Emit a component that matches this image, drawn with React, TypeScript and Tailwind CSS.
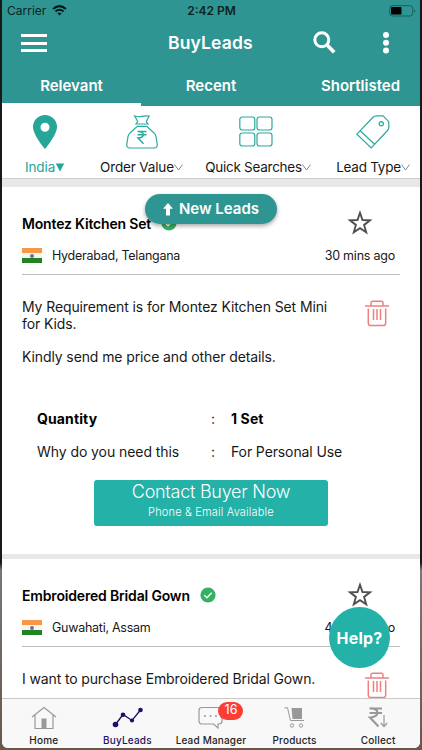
import type { ReactNode } from "react";

function Star() {
  return (
    <svg width="26" height="26" viewBox="0 0 26 26" className="block">
      <path d="M13 2.8 L15.5 10 L23 10.3 L17.1 14.9 L19.2 22.3 L13 18.1 L6.8 22.3 L8.9 14.9 L3 10.3 L10.5 10 Z" fill="none" stroke="#505050" strokeWidth="1.9" />
    </svg>
  );
}

function Trash() {
  return (
    <svg width="26" height="28" viewBox="0 0 26 28" fill="none" stroke="#ee8080" strokeWidth="1.5" className="block">
      <path d="M1 7H25M7 6.8V4Q7 2.3 8.7 2.3H17.3Q19 2.3 19 4V6.8M4.3 9.5V24Q4.3 26.6 6.8 26.6H19.2Q21.7 26.6 21.7 24V9.5M9.5 10V21M13 10V21M16.5 10V21" />
    </svg>
  );
}

function Flag() {
  return (
    <div className="relative flex h-[15px] w-5 flex-col">
      <div className="h-[5px] bg-[#f79847]" />
      <div className="h-[5px] bg-[#f4f4f4]" />
      <div className="h-[5px] bg-[#218322]" />
      <div className="absolute left-2 top-[5.5px] size-1 rounded-full bg-[#70708f]" />
    </div>
  );
}

function Check() {
  return (
    <svg width="16" height="16" viewBox="0 0 16 16" className="block">
      <circle cx="8" cy="8" r="7.6" fill="#36b164" />
      <path d="M4.3 8.3L7 10.8L11.7 5.8" fill="none" stroke="#fff" strokeWidth="1.3" />
    </svg>
  );
}

function Chevron() {
  return (
    <svg width="9" height="7" viewBox="0 0 9 7" className="mt-px">
      <path d="M.5.6L4.5 6L8.5.6" fill="none" stroke="#777" strokeWidth=".9" />
    </svg>
  );
}

function CardHead({ title, place, time }: { title: string; place: string; time: string }) {
  return (
    <div className="h-[88px] border-b border-[#bdbdbd] pt-[23px]">
      <div className="flex h-[26px] items-center">
        <span className="text-[14px] font-semibold tracking-[-0.17px] text-black">{title}</span>
        <span className="ml-[10px]"><Check /></span>
        <span className="ml-auto mr-[27px]"><Star /></span>
      </div>
      <div className="mt-[7px] flex h-[25px] items-center text-[12.5px] leading-[15px]">
        <Flag />
        <span className="ml-[10px] tracking-[-0.26px]">{place}</span>
        <span className="ml-auto mr-[5px] tracking-[-0.22px]">{time}</span>
      </div>
    </div>
  );
}

function Filter({ children, label, className }: { children: ReactNode; label: ReactNode; className: string }) {
  return (
    <div className={`flex shrink-0 flex-col items-center ${className}`}>
      <div className="flex h-[51px] items-center">{children}</div>
      <div className="mt-px flex h-[18px] items-center whitespace-nowrap text-[13.5px]">{label}</div>
    </div>
  );
}

function TabItem({ icon, label, color }: { icon: ReactNode; label: string; color: string }) {
  return (
    <div className="flex w-[83.6px] flex-col items-center">
      <div className="flex h-[36px] items-center pt-[3px]">{icon}</div>
      <span className={`whitespace-nowrap text-[10px] font-medium leading-[15px] tracking-[0.17px] ${color}`}>{label}</span>
    </div>
  );
}

export default function App() {
  return (
    <div className="h-[750px] w-[422px] overflow-hidden bg-linear-to-b from-[#191919] from-75% via-[#777] via-76% to-[#69574c] px-[2px] font-['Inter','Noto_Sans',sans-serif] text-[#181818]">
      <div className="flex h-[748px] flex-col overflow-hidden rounded-b-[6px] bg-white">
        <header className="h-[106px] shrink-0 bg-[#2f9593] text-white">
          <div className="flex h-[21px] items-center justify-between pl-[5px] pr-1 text-[#0c2423]">
            <div className="flex w-[100px] items-center gap-[6px] text-[12px]">
              Carrier
              <svg width="15" height="11" viewBox="0 0 15 11" fill="none" stroke="#071817" strokeWidth="2">
                <path d="M1 4Q7.5-1.8 14 4M3.5 6.5Q7.5 3 11.5 6.5" />
                <path d="M7.5 10.5L5.3 8.2Q7.5 6.6 9.7 8.2Z" fill="#071817" stroke="none" />
              </svg>
            </div>
            <span className="text-[12px] font-semibold">2:42 PM</span>
            <div className="flex w-[100px] justify-end">
              <svg width="27" height="12" viewBox="0 0 27 12">
                <rect x=".7" y=".7" width="23" height="10.3" rx="2.5" fill="none" stroke="#17615f" />
                <rect x="2" y="2" width="10.5" height="7.5" rx="1" fill="#000" />
                <path d="M25 4Q27.5 5.8 25 7.8Z" fill="#17615f" />
              </svg>
            </div>
          </div>
          <div className="flex h-[44px] items-center pl-[19px]">
            <div className="flex w-[26px] flex-col gap-[4.5px]">
              <div className="h-[3px] bg-white" />
              <div className="h-[3px] bg-white" />
              <div className="h-[3px] bg-white" />
            </div>
            <span className="ml-[121px] w-[86px] text-[17.5px] font-semibold tracking-[0.15px]">BuyLeads</span>
            <svg className="ml-[58px]" width="26" height="26" viewBox="0 0 26 26" fill="none" stroke="#fff">
              <circle cx="9.8" cy="9.8" r="7" strokeWidth="3" />
              <path d="M14.8 14.8L22.2 22.2" strokeWidth="3.7" />
            </svg>
            <svg className="ml-[44px]" width="8" height="24" viewBox="0 0 8 24" fill="#fff">
              <circle cx="4" cy="4" r="3" /><circle cx="4" cy="11.8" r="3" /><circle cx="4" cy="19.4" r="3" />
            </svg>
          </div>
          <div className="flex h-[41px] text-[15px] font-semibold leading-[42px]">
            <div className="w-[139px] border-b-[3px] border-white text-center">Relevant</div>
            <div className="w-[140px] text-center">Recent</div>
            <div className="w-[139px] pl-[20px] text-center">Shortlisted</div>
          </div>
        </header>

        <nav className="flex h-[73px] shrink-0 border-b border-[#cecece] text-[#181818]">
          <Filter className="w-[86px]" label={<span className="flex items-center tracking-[-0.1px] text-[#25a699]">India<svg width="10" height="9" viewBox="0 0 10 9"><path d="M.8.5H9.2L5 8.5Z" fill="#25a699" /></svg></span>}>
            <svg width="24" height="34" viewBox="0 0 24 34"><path fillRule="evenodd" d="M12 0A12 12 0 0 0 0 12C0 20 12 34 12 34S24 20 24 12A12 12 0 0 0 12 0ZM12 7.7A4.5 4.5 0 1 1 12 16.7A4.5 4.5 0 0 1 12 7.7Z" fill="#25a699" /></svg>
          </Filter>
          <Filter className="ml-[7px] w-[93px]" label={<><span className="tracking-[-0.16px]">Order Value</span><Chevron /></>}>
            <svg width="32" height="34" viewBox="0 0 32 34" fill="none" stroke="#2aa99e" strokeWidth="1.2">
              <path d="M8.7 1Q12 2.3 15.8 1.4T23.2 1L20.3 6.5L22 9H10L11.7 6.5ZM11.3 11.3H20.7L27.5 17.5Q29.5 19 30 21.5L31.2 29Q31.6 33 28 33H4Q.4 33 .8 29L2 21.5Q2.5 19 4.5 17.5Z" />
              <path d="M11.5 16.5H20.5M11.5 19.7H20.5M12 16.5C19 16 19 23 12 23L17.5 28.8" strokeWidth="1.5" />
            </svg>
          </Filter>
          <Filter className="ml-[13px] w-[114px]" label={<><span className="tracking-[-0.27px]">Quick Searches</span><Chevron /></>}>
            <svg className="-ml-[4px]" width="34" height="32" viewBox="0 0 34 32" fill="none" stroke="#2aa99e" strokeWidth="1.2">
              <rect x=".8" y="1" width="15" height="13" rx="2.5" /><rect x="18" y="1" width="15" height="13" rx="2.5" />
              <rect x=".8" y="17" width="15" height="13" rx="2.5" /><rect x="18" y="17" width="15" height="13" rx="2.5" />
            </svg>
          </Filter>
          <Filter className="ml-[14px] w-[88px]" label={<><span className="tracking-[-0.25px]">Lead Type</span><Chevron /></>}>
            <svg width="34" height="34" viewBox="0 0 34 34" fill="none" stroke="#2aa99e" strokeWidth="1.2">
              <path d="M.9 19.2L17 2.3Q18.5.9 20.5.9H27L32.8 6.7V12.5Q32.8 14 31.5 15.5L15.2 33ZM4.2 15.7L18.6 29.3" /><circle cx="25.3" cy="8.7" r="2.1" />
            </svg>
          </Filter>
        </nav>
        <div className="h-2 shrink-0 bg-[#e8e8e8]" />

        <main className="h-[511px] shrink-0 overflow-hidden">
          <article className="h-[367px] px-5">
            <CardHead title="Montez Kitchen Set" place="Hyderabad, Telangana" time="30 mins ago" />
            <div className="flex h-[127px] pt-[24px]">
              <div className="w-[320px] whitespace-pre-line text-[14px] leading-[16.8px] tracking-[-0.11px]">{"My Requirement is for Montez Kitchen Set Mini\nfor Kids.\n\nKindly send me price and other details."}</div>
              <div className="ml-[22px]"><Trash /></div>
            </div>
            <div className="grid grid-cols-[174px_20px_1fr] pl-[15px] text-[14px] leading-[33px] tracking-[-0.07px]">
              <b className="font-bold tracking-[0.12px] text-black">Quantity</b><span>:</span><b className="font-bold tracking-[0.12px] text-black">1 Set</b>
              <span>Why do you need this</span><span>:</span><span className="tracking-[-0.11px]">For Personal Use</span>
            </div>
            <button className="ml-[72px] mt-[12px] flex h-[46px] w-[234px] flex-col items-center rounded-[3px] bg-[#23b1a8] text-white">
              <span className="text-[18px] font-light leading-[24px] tracking-[-0.26px]">Contact Buyer Now</span>
              <span className="text-[11px] font-light leading-[17px] tracking-[0.18px]">Phone &amp; Email Available</span>
            </button>
          </article>
          <div className="h-[5px] bg-[#e8e8e8]" />
          <article className="px-5">
            <CardHead title="Embroidered Bridal Gown" place="Guwahati, Assam" time="45 mins ago" />
            <div className="flex pt-[24px]">
              <div className="w-[320px] text-[14px] leading-[16.8px] tracking-[-0.13px]">I want to purchase Embroidered Bridal Gown.</div>
              <div className="ml-[22px]"><Trash /></div>
            </div>
          </article>
        </main>

        <footer className="flex h-[50px] shrink-0 border-t border-[#c9c9c9] bg-[#f8f8f8]">
          <TabItem label="Home" color="text-[#222]" icon={
            <svg width="26" height="24" viewBox="0 0 26 24" fill="none" stroke="#999"><path d="M1 11L13 1.5L25 11M4 9V22.5H22V9" strokeWidth="1.2" /><path d="M10.5 12.5H15.5V22H10.5Z" fill="#999" stroke="none" /></svg>
          } />
          <TabItem label="BuyLeads" color="text-[#211361]" icon={
            <svg width="31" height="22" viewBox="0 0 31 22" fill="#1c0f67"><path d="M3.5 17.5L11 7.5L20 13.5L28.5 3" fill="none" stroke="#1c0f67" strokeWidth="1.3" /><circle cx="3.5" cy="17.5" r="2.8" /><circle cx="11" cy="7.7" r="2.3" /><circle cx="20" cy="13.5" r="2.1" /><circle cx="28.5" cy="3" r="2.3" /></svg>
          } />
          <TabItem label="Lead Manager" color="text-[#222]" icon={
            <div className="relative">
              <svg width="25" height="24" viewBox="0 0 25 24"><path d="M4 1.5H21Q24 1.5 24 4.5V15Q24 18 21 18H20V22L15.5 18H4Q1 18 1 15V4.5Q1 1.5 4 1.5Z" fill="none" stroke="#999" strokeWidth="1.2" /><g fill="#999"><circle cx="7" cy="10" r="1" /><circle cx="12.5" cy="10" r="1" /><circle cx="18" cy="10" r="1" /></g></svg>
              <span className="absolute left-[20px] top-[-4px] flex h-[18px] w-[25px] items-center justify-center rounded-full bg-[#fb3d36] text-[12.5px] text-white">16</span>
            </div>
          } />
          <TabItem label="Products" color="text-[#222]" icon={
            <svg width="21" height="23" viewBox="0 0 21 23" fill="none" stroke="#999"><path d="M.5 1.8H3.5L6.5 14.5H20" /><path d="M7.5 2H18V13H8.5Z" fill="#999" stroke="none" /><circle cx="8" cy="19.5" r="1.7" /><circle cx="17" cy="19.5" r="1.7" /></svg>
          } />
          <TabItem label="Collect" color="text-[#222]" icon={
            <svg width="21" height="23" viewBox="0 0 21 23" fill="none" stroke="#999"><path d="M1.5 2.5H14M1.5 7H14M2 2.5C12 1.5 12 11.5 2 11.5L10.5 20.5" strokeWidth="2.2" /><path d="M16 9V20.5M12.8 17L16 20.5L19.2 17" strokeWidth="1.2" /></svg>
          } />
        </footer>
      </div>

      <div className="absolute left-[145px] top-[194px] flex h-[30px] w-[132px] items-center justify-center gap-[6px] rounded-full bg-[#2f9593] text-[15px] font-semibold text-white shadow-[0_2px_4px_rgba(0,0,0,0.35)]">
        <svg width="10" height="13" viewBox="0 0 10 13"><path d="M5 0L10 5.8H7V12.5H3V5.8H0Z" fill="#fff" /></svg>
        New Leads
      </div>
      <div className="absolute left-[329px] top-[607px] flex size-[61px] items-center justify-center rounded-full bg-[#23b1a8] text-[16px] font-bold tracking-[0.2px] text-white">Help?</div>
    </div>
  );
}
